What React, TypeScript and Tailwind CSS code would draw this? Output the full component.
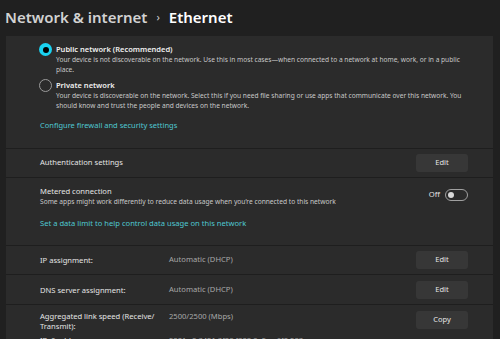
import React from "react";

const font = { fontFamily: '"Noto Sans", "Open Sans", sans-serif' };

function Btn({ label }: { label: string }) {
  return (
    <div className="flex h-[18px] w-[52px] items-center justify-center rounded-[3px] bg-[#373737] text-[7.5px] text-[#e6e6e6]">
      {label}
    </div>
  );
}

function InfoRow({ label, value, btn, h = "h-[29px]" }: { label: React.ReactNode; value: string; btn: string; h?: string }) {
  return (
    <div className={`flex ${h} items-center border-t border-[#1e1e1e] pl-[34px] pr-[25px]`}>
      <div className="w-[129px] text-[7.6px] leading-[10px] text-[#e4e4e4]">{label}</div>
      <div className="flex-1 text-[7.6px] text-[#a8a8a8]">{value}</div>
      <Btn label={btn} />
    </div>
  );
}

export default function App() {
  return (
    <div className="h-[339px] w-[500px] overflow-hidden bg-[#202020]" style={font}>
      <div className="flex h-[36px] items-center pl-[5px] pb-[2px]">
        <span className="text-[15px] font-semibold text-[#d2d2d2]">Network &amp; internet</span>
        <span className="mx-[9px] text-[11px] text-[#cfcfcf]">›</span>
        <span className="text-[15px] font-semibold text-white">Ethernet</span>
      </div>
      <div className="ml-[6px] w-[487px] bg-[#2b2b2b]">
        {/* radios section */}
        <div className="h-[112px] pt-[8px] pl-[34px]">
          <div className="ml-[-1px] flex">
            <div className="mt-[-1px] flex h-[13px] w-[13px] shrink-0 items-center justify-center rounded-full bg-[#1ad2f0]">
              <div className="h-[6px] w-[6px] rounded-full bg-black" />
            </div>
            <div className="ml-[4px]">
              <div className="text-[7.5px] font-semibold leading-[11px] text-[#f0f0f0]">Public network (Recommended)</div>
              <div className="w-[412px] text-[6.6px] leading-[10px] text-[#c8c8c8]">
                Your device is not discoverable on the network. Use this in most cases—when connected to a network at home, work, or in a public place.
              </div>
            </div>
          </div>
          <div className="ml-[-1px] mt-[5px] flex">
            <div className="mt-[-1px] h-[13px] w-[13px] shrink-0 rounded-full border border-[#9a9a9a]" />
            <div className="ml-[4px]">
              <div className="text-[7.5px] font-semibold leading-[11px] text-[#f0f0f0]">Private network</div>
              <div className="w-[412px] text-[6.6px] leading-[10px] text-[#c8c8c8]">
                Your device is discoverable on the network. Select this if you need file sharing or use apps that communicate over this network. You should know and trust the people and devices on the network.
              </div>
            </div>
          </div>
          <div className="mt-[9px] text-[7.5px] text-[#4fc8d2]">Configure firewall and security settings</div>
        </div>
        {/* auth */}
        <div className="flex h-[29px] items-center justify-between border-t border-[#1e1e1e] pl-[34px] pr-[25px]">
          <div className="text-[7.6px] text-[#e4e4e4]">Authentication settings</div>
          <Btn label="Edit" />
        </div>
        {/* metered */}
        <div className="h-[68px] border-t border-[#1e1e1e] pl-[34px] pr-[25px] pt-[8px]">
          <div className="flex items-start justify-between">
            <div>
              <div className="text-[7.6px] leading-[11px] text-[#e4e4e4]">Metered connection</div>
              <div className="text-[6.65px] leading-[10px] text-[#c8c8c8]">
                Some apps might work differently to reduce data usage when you’re connected to this network
              </div>
            </div>
            <div className="mt-[3px] flex items-center">
              <span className="mr-[5px] text-[7.6px] text-[#e4e4e4]">Off</span>
              <div className="flex h-[12px] w-[23px] items-center rounded-full border border-[#a0a0a0] pl-[2px]">
                <div className="h-[6px] w-[6px] rounded-full bg-[#d8d8d8]" />
              </div>
            </div>
          </div>
          <div className="mt-[11px] text-[7.6px] text-[#4fc8d2]">Set a data limit to help control data usage on this network</div>
        </div>
        <InfoRow label="IP assignment:" value="Automatic (DHCP)" btn="Edit" />
        <InfoRow label="DNS server assignment:" value="Automatic (DHCP)" btn="Edit" h="h-[30px]" />
        <div className="flex h-[31px] items-start border-t border-[#1e1e1e] pl-[34px] pr-[25px] pt-[6px]">
          <div className="w-[129px] text-[7.6px] leading-[10px] text-[#e4e4e4]">
            Aggregated link speed (Receive/
            <br />
            Transmit):
          </div>
          <div className="flex-1 text-[7.6px] leading-[10px] text-[#a8a8a8]">2500/2500 (Mbps)</div>
          <Btn label="Copy" />
        </div>
        <div className="flex h-[30px] items-start pl-[34px] pr-[25px]">
          <div className="w-[129px] text-[7.6px] leading-[10px] text-[#e4e4e4]">IPv6 address:</div>
          <div className="flex-1 text-[7.6px] leading-[10px] text-[#a8a8a8]">2001:c0:3421:3f08:f908:9e5a:a6f0:283</div>
        </div>
      </div>
    </div>
  );
}
